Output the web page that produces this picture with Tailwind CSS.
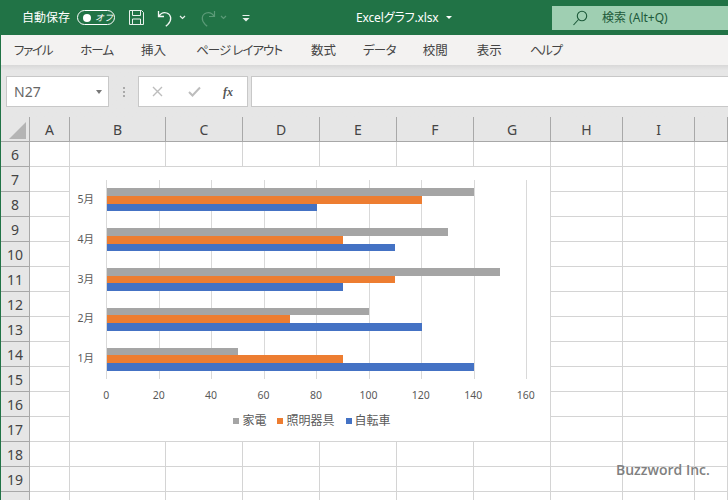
<!DOCTYPE html>
<html lang="ja">
  <head>
    <meta charset="UTF-8" />
    <title>Excelグラフ.xlsx</title>
    <script src="https://cdn.jsdelivr.net/npm/@tailwindcss/browser@4"></script>
  </head>
  <body class="m-0 h-[500px] w-[728px] overflow-hidden bg-white font-['Noto_Sans','Noto_Sans_CJK_JP',sans-serif]">
    <!-- title bar -->
    <div class="flex h-[35px] items-center bg-[#217346] text-white">
      <span class="ml-[22px] text-[12px]">自動保存</span>
      <div class="ml-[7px] flex h-[15px] w-[38px] items-center rounded-full border border-white pl-[5px]">
        <div class="h-[8px] w-[8px] rounded-full bg-white"></div>
        <span class="ml-[4px] text-[9px] italic leading-none">オフ</span>
      </div>
      <svg class="ml-[13px]" width="17" height="17" viewBox="0 0 17 17" fill="none" stroke="#e8f1ec" stroke-width="1">
        <path d="M1.5 1.5h12l2 2v12h-14z" />
        <path d="M4.5 1.5v5h8v-5M4.5 15.5v-5.5h8v5.5" />
      </svg>
      <svg class="ml-[12px]" width="18" height="18" viewBox="0 0 18 18" fill="none" stroke="#f2f7f4" stroke-width="1.3">
        <path d="M1.5 2v5.5h5.500M1.800 7.300c2-3 5-4.300 8-3.300 4.500 1.500 5.500 7 1 11.500l-2 1.800" />
      </svg>
      <svg class="ml-[4px]" width="7" height="5" viewBox="0 0 7 5" fill="none" stroke="#e8f1ec" stroke-width="1.200"><path d="M1 1l2.500 2.500L6 1" /></svg>
      <svg class="ml-[12px]" width="18" height="18" viewBox="0 0 18 18" fill="none" stroke="#5b9a77" stroke-width="1.200">
        <path d="M16.500 2v5.500H11M16.200 7.300c-2-3-5-4.300-8-3.300-4.500 1.500-5.500 7-1 11.500l2 1.800" />
      </svg>
      <svg class="ml-[4px]" width="7" height="5" viewBox="0 0 7 5" fill="none" stroke="#5b9a77" stroke-width="1.200"><path d="M1 1l2.500 2.500L6 1" /></svg>
      <svg class="ml-[15px]" width="8" height="8" viewBox="0 0 8 8" fill="none" stroke="#e8f1ec" stroke-width="1">
        <path d="M0.500 1.500h7" />
        <path d="M0.500 4h7l-3.500 3.500z" fill="#e8f1ec" stroke="none" />
      </svg>
      <span class="ml-[106px] text-[12px] tracking-[-0.15px] [font-feature-settings:'palt']">Excelグラフ.xlsx</span>
      <div class="ml-[7px] h-0 w-0 border-x-[3px] border-t-[3px] border-x-transparent border-t-white"></div>
      <div class="ml-auto mt-[6px] flex h-[24px] w-[176px] items-center self-start bg-[#9fcfb2] text-[#1d5a3a]">
        <svg class="ml-[20px]" width="16" height="16" viewBox="0 0 16 16" fill="none" stroke="#1d5a3a" stroke-width="1.100">
          <circle cx="10" cy="6" r="4.700" />
          <path d="M6.500 9.500L1.500 15" />
        </svg>
        <span class="ml-[14px] text-[12px]">検索 (Alt+Q)</span>
      </div>
    </div>

    <div class="flex border-l border-[#217346]">
      <div class="w-full">
        <!-- ribbon tabs -->
        <div class="flex h-[30px] items-center bg-[#f3f2f1] pl-[13px] pt-[3px] text-[12.500px] text-[#444] [font-feature-settings:'palt']">
          <span class="tracking-[-1.250px]">ファイル</span>
          <span class="ml-[28px] tracking-[-1px]">ホーム</span>
          <span class="ml-[28px]">挿入</span>
          <span class="ml-[30px] tracking-[-1px]">ページ レイアウト</span>
          <span class="ml-[29px]">数式</span>
          <span class="ml-[27px] tracking-[-0.700px]">データ</span>
          <span class="ml-[27px]">校閲</span>
          <span class="ml-[29px]">表示</span>
          <span class="ml-[28px] tracking-[-1.300px]">ヘルプ</span>
        </div>

        <!-- formula bar -->
        <div class="h-[52px] bg-gradient-to-b from-[#d8d8d8] to-[#e6e6e6] to-[10%] pt-[11px]">
          <div class="flex h-[31px] items-stretch">
            <div class="ml-[5px] flex w-[103px] items-center justify-between border border-[#c8c8c8] bg-white pl-[7px] pr-[6px] text-[14px] text-[#666]">
              <span>N27</span>
              <div class="h-0 w-0 border-x-[3.500px] border-t-[4px] border-x-transparent border-t-[#777]"></div>
            </div>
            <div class="flex w-[29px] flex-col items-center justify-center gap-[2px]">
              <div class="h-[2px] w-[2px] bg-[#aaa]"></div>
              <div class="h-[2px] w-[2px] bg-[#aaa]"></div>
              <div class="h-[2px] w-[2px] bg-[#aaa]"></div>
            </div>
            <div class="flex w-[110px] items-center border border-[#c8c8c8] bg-white">
              <svg class="ml-[13px]" width="11" height="11" viewBox="0 0 11 11" fill="none" stroke="#bdbdbd" stroke-width="1.400"><path d="M1 1l9 9M10 1l-9 9" /></svg>
              <svg class="ml-[25px]" width="13" height="11" viewBox="0 0 13 11" fill="none" stroke="#bdbdbd" stroke-width="2"><path d="M1 6l3.500 3.500L12 1.500" /></svg>
              <span class="ml-[22px] font-['Liberation_Serif',serif] text-[12px] font-bold italic text-[#555]">fx</span>
            </div>
            <div class="ml-[3px] flex-1 border-y border-l border-[#c8c8c8] bg-white"></div>
          </div>
        </div>

        <!-- sheet -->
        <div class="relative h-[383px] overflow-hidden bg-[#e6e6e6]">
          <div id="sheet" class="grid grid-cols-[29px_40px_96px_77px_77px_77px_77px_77px_72px_72px_33px] auto-rows-[25px]"></div>

          <svg class="absolute left-[8px] top-[5px]" width="18" height="18" viewBox="0 0 18 18"><path d="M17 0v17H0z" fill="#b4b4b4" /></svg>

          <!-- chart -->
          <div class="absolute left-[69px] top-[50px] h-[274px] w-[480px] bg-white pt-[13px]">
            <div class="flex">
              <div id="labels" class="w-[36px] pr-[12px] text-right text-[10.500px] text-[#595959]"></div>
              <div class="relative h-[199px] w-[421px]">
                <div class="absolute inset-0 flex justify-between">
                  <div class="w-px bg-[#d9d9d9]"></div>
                  <div class="w-px bg-[#d9d9d9]"></div>
                  <div class="w-px bg-[#d9d9d9]"></div>
                  <div class="w-px bg-[#d9d9d9]"></div>
                  <div class="w-px bg-[#d9d9d9]"></div>
                  <div class="w-px bg-[#d9d9d9]"></div>
                  <div class="w-px bg-[#d9d9d9]"></div>
                  <div class="w-px bg-[#d9d9d9]"></div>
                  <div class="w-px bg-[#d9d9d9]"></div>
                </div>
                <div id="bars" class="relative ml-[0.500px]"></div>
              </div>
            </div>
            <div class="ml-[10px] mt-[9px] grid w-[472px] grid-cols-9 text-center text-[10.500px] text-[#595959]">
              <span>0</span><span>20</span><span>40</span><span>60</span><span>80</span><span>100</span><span>120</span><span>140</span><span>160</span>
            </div>
            <div class="mt-[8px] flex items-center justify-center gap-[11px] pl-[4px] text-[12px] text-[#595959]">
              <div class="flex items-center gap-[3px]"><div class="h-[6px] w-[6px] bg-[#a5a5a5]"></div><span>家電</span></div>
              <div class="flex items-center gap-[3px]"><div class="h-[6px] w-[6px] bg-[#ed7d31]"></div><span>照明器具</span></div>
              <div class="flex items-center gap-[3px]"><div class="h-[6px] w-[6px] bg-[#4472c4]"></div><span>自転車</span></div>
            </div>
          </div>

          <div class="absolute left-[615px] top-[342px] font-['Open_Sans',sans-serif] text-[14px] font-semibold text-[#808080]">Buzzword Inc.</div>
        </div>
      </div>
    </div>

    <script>
      // sheet cells
      const cols = ["A", "B", "C", "D", "E", "F", "G", "H", "I", ""];
      const headCell = "flex items-center justify-center border-r border-b border-[#a8a8a8] bg-[#e6e6e6] text-[14px] text-[#444]";
      const cell = "border-r border-b border-[#d4d4d4] bg-white";
      let html = `<div class="${headCell}"></div>`;
      cols.forEach((c) => {
        html += `<div class="${headCell}">${c}</div>`;
      });
      for (let r = 6; r <= 20; r++) {
        html += `<div class="${headCell}">${r}</div>`;
        cols.forEach(() => {
          html += `<div class="${cell}"></div>`;
        });
      }
      document.getElementById("sheet").innerHTML = html;

      // chart data: 家電, 照明器具, 自転車
      const data = [
        ["5月", 140, 120, 80],
        ["4月", 130, 90, 110],
        ["3月", 150, 110, 90],
        ["2月", 100, 70, 120],
        ["1月", 50, 90, 140],
      ];
      const unit = 2.625;
      document.getElementById("labels").innerHTML = data
        .map((d) => `<div class="flex h-[39.800px] items-center justify-end">${d[0]}</div>`)
        .join("");
      document.getElementById("bars").innerHTML = data
        .map(
          (d) => `<div class="flex h-[39.800px] flex-col justify-center">
            <div class="h-[7.700px] bg-[#a5a5a5]" style="width:${d[1] * unit}px"></div>
            <div class="h-[7.700px] bg-[#ed7d31]" style="width:${d[2] * unit}px"></div>
            <div class="h-[7.700px] bg-[#4472c4]" style="width:${d[3] * unit}px"></div>
          </div>`
        )
        .join("");
    </script>
  </body>
</html>
